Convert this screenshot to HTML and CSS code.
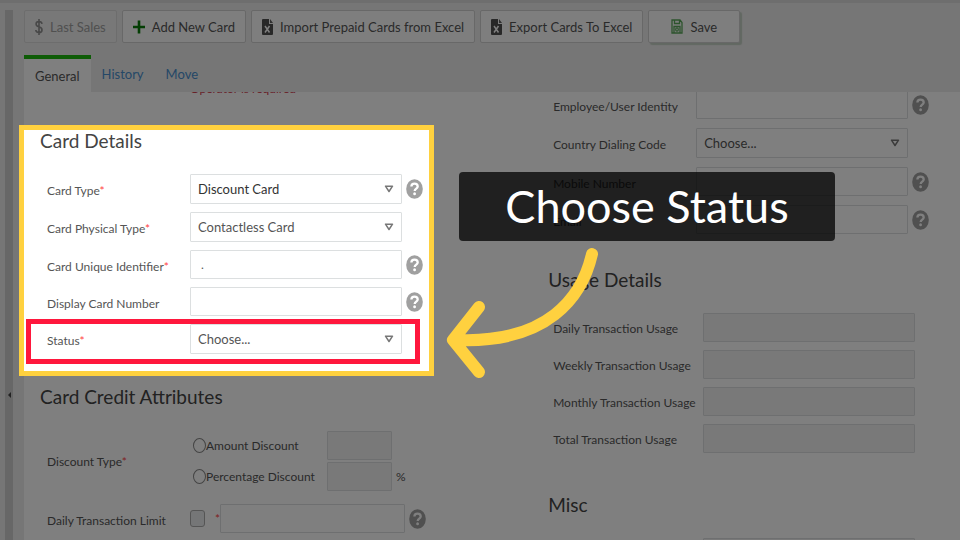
FILE: index.html
```html
<!DOCTYPE html>
<html lang="en">
<head>
<meta charset="utf-8">
<title>Card</title>
<link rel="stylesheet" href="styles.css">
</head>
<body>
<svg class="defs" aria-hidden="true">
  <symbol id="help" viewBox="0 0 17 20"><ellipse cx="8.5" cy="10" rx="8.3" ry="9.8" fill="#a0a0a0"/><path d="M5.4 7.6C5.4 5.6 6.7 4.6 8.5 4.6c1.900 0 3.200 1 3.200 2.800 0 2.200-3 2.200-3 4.600" fill="none" stroke="#fff" stroke-width="2.300"/><ellipse cx="8.600" cy="14.800" rx="1.400" ry="1.500" fill="#fff"/></symbol>
  <symbol id="arrow" viewBox="0 0 10 8"><path d="M1.500 1.200h7L5 6.500z" fill="#fff" stroke="#777" stroke-width="1.500" stroke-linejoin="round"/></symbol>
  <symbol id="excel" viewBox="0 0 11 16"><path d="M1 0h6v5h4v10a1 1 0 0 1-1 1H1a1 1 0 0 1-1-1V1a1 1 0 0 1 1-1z" fill="#505050"/><path d="M8 0l3 4H8z" fill="#606060"/><path d="M3 7l4.500 6.500M7.500 7L3 13.500" stroke="#fff" stroke-width="1.500"/></symbol>
</svg>
<div class="app">
  <div class="splitter"><span></span></div>
  <main class="main">
    <div class="toolbar">
      <button class="btn muted" disabled><svg width="8" height="16" viewBox="0 0 8 16"><path d="M7 4.800C6.800 3.200 5.700 2.500 4 2.500S1.100 3.400 1.100 5c0 3.800 5.900 1.900 5.900 5.900 0 1.700-1.200 2.600-3 2.600S1 12.600.8 11M4 0v16" fill="none" stroke="#909090" stroke-width="1.600"/></svg>Last Sales</button>
      <button class="btn"><svg width="12" height="14" viewBox="0 0 12 14"><path d="M6 .5v13M0 7h12" stroke="#087d08" stroke-width="2.600"/></svg>Add New Card</button>
      <button class="btn"><svg width="11" height="16"><use href="#excel"/></svg>Import Prepaid Cards from Excel</button>
      <button class="btn"><svg width="11" height="16"><use href="#excel"/></svg>Export Cards To Excel</button>
      <button class="btn save"><svg width="12" height="15" viewBox="0 0 12 15"><path d="M1 1h8l2 2.500V14H1zM3.500 1v3.500h5V1M3 14V7.500h6V14" fill="none" stroke="#5aa85a" stroke-width="1.300"/><ellipse cx="6" cy="10.500" rx="1.300" ry="1.600" fill="none" stroke="#5aa85a" stroke-width="1.200"/></svg>Save</button>
    </div>
    <nav class="tabs"><a class="active" href="#general">General</a><a href="#history">History</a><a href="#move">Move</a></nav>
    <div class="panel" id="general">
      <form class="columns">
        <div class="col left">
          <p class="error">Operator is required</p>
          <section class="details">
            <h2>Card Details</h2>
            <div class="row"><label for="type">Card Type<i>*</i></label><span class="select"><select id="type" class="strong"><option>Discount Card</option></select><svg><use href="#arrow"/></svg></span><svg class="help"><use href="#help"/></svg></div>
            <div class="row"><label for="ptype">Card Physical Type<i>*</i></label><span class="select"><select id="ptype"><option>Contactless Card</option></select><svg><use href="#arrow"/></svg></span></div>
            <div class="row"><label for="uid">Card Unique Identifier<i>*</i></label><input id="uid" type="text" value=" ."><svg class="help"><use href="#help"/></svg></div>
            <div class="row"><label for="num">Display Card Number</label><input id="num" type="text"><svg class="help"><use href="#help"/></svg></div>
            <div class="row"><label for="status">Status<i>*</i></label><span class="select"><select id="status"><option>Choose...</option></select><svg><use href="#arrow"/></svg></span></div>
          </section>
          <section class="credit">
            <h2>Card Credit Attributes</h2>
            <fieldset class="discount">
              <legend class="caption-cell">Discount Type<i>*</i></legend>
              <div class="options">
                <div class="option"><input type="radio" name="discount" id="amount"><label for="amount">Amount Discount</label><input type="text" aria-label="Amount" disabled></div>
                <div class="option"><input type="radio" name="discount" id="percent"><label for="percent">Percentage Discount</label><input type="text" aria-label="Percentage" disabled><span class="unit">%</span></div>
              </div>
            </fieldset>
            <div class="row limit"><label for="limit">Daily Transaction Limit</label><input type="checkbox" aria-label="Enable limit"><i>*</i><input id="limit" type="text"><svg class="help"><use href="#help"/></svg></div>
          </section>
        </div>
        <div class="col right">
          <div class="group">
            <div class="row"><label for="emp">Employee/User Identity</label><input id="emp" type="text"><svg class="help"><use href="#help"/></svg></div>
            <div class="row"><label for="code">Country Dialing Code</label><span class="select"><select id="code"><option>Choose...</option></select><svg><use href="#arrow"/></svg></span></div>
            <div class="row"><label for="mobile">Mobile Number</label><input id="mobile" type="text"><svg class="help"><use href="#help"/></svg></div>
            <div class="row"><label for="email">Email</label><input id="email" type="text"><svg class="help"><use href="#help"/></svg></div>
          </div>
          <section class="usage">
            <h2>Usage Details</h2>
            <div class="row"><label for="u1">Daily Transaction Usage</label><input id="u1" type="text" disabled></div>
            <div class="row"><label for="u2">Weekly Transaction Usage</label><input id="u2" type="text" disabled></div>
            <div class="row"><label for="u3">Monthly Transaction Usage</label><input id="u3" type="text" disabled></div>
            <div class="row"><label for="u4">Total Transaction Usage</label><input id="u4" type="text" disabled></div>
          </section>
          <section class="usage misc">
            <h2>Misc</h2>
            <div class="row"><input type="text" aria-label="Misc" disabled></div>
          </section>
        </div>
      </form>
    </div>
  </main>
</div>
<div class="spotlight"></div>
<div class="marker"></div>
<div class="callout">Choose Status</div>
<svg class="pointer" viewBox="0 0 160 140"><path d="M147 14C137 58 102 103 14 100M34 67L8 100L34 132" fill="none" stroke="#ffd13f" stroke-width="12" stroke-linecap="round" stroke-linejoin="round"/></svg>
</body>
</html>
```
FILE: styles.css
```css
* { box-sizing: border-box; }
body {
  margin: 0;
  height: 100vh;
  overflow: hidden;
  position: relative;
  background: #ececec;
  color: #555;
  font: 12px/18px Lato, "Noto Sans", sans-serif;
}
.defs { position: absolute; width: 0; height: 0; }
i { color: #f44; font-style: normal; }
.app { display: flex; height: 100%; border-top: 3px solid #dcdcdc; }
.splitter {
  width: 8px;
  margin: 7px 11px 0 5px;
  background: #cecece;
  flex: none;
  display: flex;
  align-items: center;
  justify-content: center;
}
.splitter span {
  margin-top: 240px;
  border: 3px solid transparent;
  border-right-color: #444;
  border-left: 0;
}
.main { flex: 1; min-width: 0; display: flex; flex-direction: column; }

.toolbar { display: flex; gap: 5px; padding-top: 7px; }
.btn {
  display: flex;
  align-items: center;
  gap: 7px;
  height: 33px;
  padding: 0 10px;
  border: 1px solid #d0d0d0;
  border-radius: 2px;
  background: #fdfdfd;
  color: #555;
  font: 13px/20px Lato, "Noto Sans", sans-serif;
  white-space: nowrap;
}
.btn.muted { background: #f0f0f0; color: #a0a0a0; border-color: #dadada; }
.btn.save { padding: 0 22px; box-shadow: 2px 2px 1px #c4d0c4; }

.tabs { display: flex; height: 37px; margin-top: 12px; font-size: 13px; }
.tabs a { padding: 10px 11px 0; color: #4a90cf; text-decoration: none; }
.tabs a.active { border-top: 4px solid #1cb80c; padding-top: 8px; background: #fff; color: #555; }

.panel { flex: 1; min-height: 0; overflow: hidden; background: #fff; }
.columns { display: grid; grid-template-columns: 56fr 44fr; margin-top: -12px; }
.error { margin: 0 0 0 166px; color: #d04050; }
.details, .credit { padding-left: 16px; }
.details { padding-top: 30px; }
.credit { padding-top: 22px; }
.right { padding-top: 10px; }
h2 { margin: 0 0 20px; font-size: 19px; line-height: 26px; font-weight: 400; color: #444; }
.row { display: flex; align-items: center; gap: 4px; margin: 0 0 8px 7px; }
.row > label { width: 139px; flex: none; padding-top: 4px; white-space: nowrap; }
input[type="text"], select {
  flex: 1;
  min-width: 0;
  max-width: 212px;
  height: 29px;
  margin: 0;
  padding: 0 7px;
  border: 1px solid #dcdfe0;
  border-radius: 1px;
  background: #fff;
  color: #555;
  font: inherit;
}
input[type="text"]:disabled { background: #f3f3f3; }
.select { position: relative; display: flex; flex: 1; max-width: 212px; }
.select select { appearance: none; height: 30px; font-size: 13px; }
.select .strong { color: #333; }
.select svg { position: absolute; right: 8px; top: 11px; width: 10px; height: 8px; pointer-events: none; }
.help { width: 17px; height: 20px; flex: none; }

.discount { display: flex; align-items: center; margin: 0 0 10px 7px; padding: 0; border: 0; }
.caption-cell { float: left; width: 143px; padding: 0; line-height: 64px; }
.options { flex: 1; }
.option { display: flex; align-items: center; height: 29px; margin-bottom: 2px; }
.option label { width: 121px; white-space: nowrap; }
.option input[type="text"] { max-width: 65px; }
.unit { margin-left: 4px; }
input[type="radio"], input[type="checkbox"] {
  appearance: none;
  width: 13px;
  height: 15px;
  margin: 0 0 0 3px;
  border: 1px solid #888;
  border-radius: 50%;
  background: #fff;
}
input[type="checkbox"] { width: 15px; height: 17px; margin: 0; border-color: #aaa; border-radius: 3px; background: #eaecef; }
.limit { gap: 0; }
.limit > label { width: 143px; }
.limit i { margin-left: 10px; }
.limit input[type="text"] { max-width: 185px; }
.limit .help { margin-left: 4px; }

.group .row { margin: 0 0 9px 5px; }
.usage { padding-top: 24px; }
.usage .row { margin-left: 5px; }
.usage .row > label { width: 146px; padding-top: 2px; }
.misc { padding-top: 31px; }
.misc .row { padding-left: 150px; }

.spotlight {
  position: absolute;
  left: 19px;
  top: 125px;
  width: 415px;
  height: 251px;
  border: 5px solid #ffd13f;
  box-shadow: 0 0 0 9999px rgba(0, 0, 0, .5);
  pointer-events: none;
}
.marker {
  position: absolute;
  left: 26px;
  top: 319px;
  width: 394px;
  height: 45px;
  border: 5px solid #ff173d;
  pointer-events: none;
}
.callout {
  position: absolute;
  left: 459px;
  top: 172px;
  width: 376px;
  border-radius: 4px;
  background: rgba(0, 0, 0, .75);
  color: #fff;
  font-size: 45px;
  line-height: 69px;
  text-align: center;
}
.pointer { position: absolute; left: 445px; top: 240px; width: 160px; height: 140px; }
```
